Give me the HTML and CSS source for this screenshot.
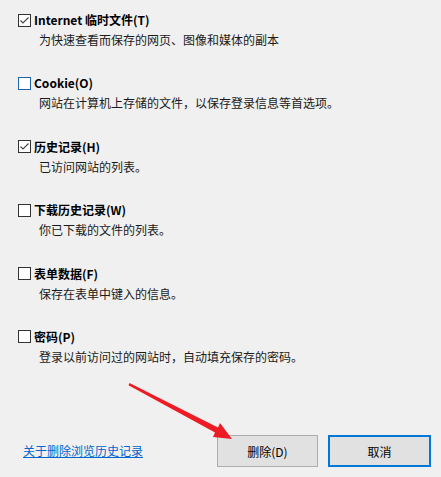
FILE: index.html
```html
<!DOCTYPE html>
<html lang="zh-CN">
<head>
    <meta charset="UTF-8">
    <title>删除浏览历史记录</title>
    <link rel="stylesheet" href="styles.css">
</head>
<body>
    <div class="dialog">
        <ul class="options">
            <li class="option">
                <div class="option-head">
                    <span class="check checked">
                        <svg width="11" height="11" viewBox="0 0 11 11"><polyline points="1.5,5.5 4,8 9.5,2.5" fill="none" stroke="#444" stroke-width="1.1"/></svg>
                    </span>
                    <span class="option-title">Internet 临时文件(T)</span>
                </div>
                <p class="option-desc">为快速查看而保存的网页、图像和媒体的副本</p>
            </li>
            <li class="option">
                <div class="option-head">
                    <span class="check focused"></span>
                    <span class="option-title">Cookie(O)</span>
                </div>
                <p class="option-desc">网站在计算机上存储的文件，以保存登录信息等首选项。</p>
            </li>
            <li class="option">
                <div class="option-head">
                    <span class="check checked">
                        <svg width="11" height="11" viewBox="0 0 11 11"><polyline points="1.5,5.5 4,8 9.5,2.5" fill="none" stroke="#444" stroke-width="1.1"/></svg>
                    </span>
                    <span class="option-title">历史记录(H)</span>
                </div>
                <p class="option-desc">已访问网站的列表。</p>
            </li>
            <li class="option">
                <div class="option-head">
                    <span class="check"></span>
                    <span class="option-title">下载历史记录(W)</span>
                </div>
                <p class="option-desc">你已下载的文件的列表。</p>
            </li>
            <li class="option">
                <div class="option-head">
                    <span class="check"></span>
                    <span class="option-title">表单数据(F)</span>
                </div>
                <p class="option-desc">保存在表单中键入的信息。</p>
            </li>
            <li class="option">
                <div class="option-head">
                    <span class="check"></span>
                    <span class="option-title">密码(P)</span>
                </div>
                <p class="option-desc">登录以前访问过的网站时，自动填充保存的密码。</p>
            </li>
        </ul>

        <div class="footer">
            <a class="help-link" href="#">关于删除浏览历史记录</a>
            <button class="btn btn-delete">删除(D)</button>
            <button class="btn btn-cancel">取消</button>
        </div>
    </div>

    <!-- red annotation arrow drawn over the dialog -->
    <svg class="arrow" width="441" height="477" viewBox="0 0 441 477">
        <polygon points="129.5,383 218,427.4 220,423 232,439 213,437 215,432.6 128.5,385.2" fill="#ed1c24"/>
    </svg>
</body>
</html>
```

FILE: styles.css
```css
* {
    box-sizing: border-box;
    margin: 0;
    padding: 0;
}

body {
    background: #f0f0f0;
    color: #000;
    font-family: "Noto Sans CJK SC", "Noto Sans", sans-serif;
    font-size: 12px;
    line-height: 16px;
    height: 100vh;
    overflow: hidden;
}

.dialog {
    height: 100%;
    display: flex;
    flex-direction: column;
}

.options {
    list-style: none;
    padding: 12px 0 0 18px;
}

.option {
    height: 63.4px;
}

.option-head {
    display: flex;
    align-items: center;
    gap: 3px;
}

.check {
    width: 13px;
    height: 13px;
    border: 1px solid #333;
    background: #fff;
    display: flex;
    align-items: center;
    justify-content: center;
}

.check.focused {
    border-color: #1b64b0;
}

.option-title {
    font-weight: bold;
}

.option-desc {
    margin-top: 4px;
    padding-left: 21px;
    color: #1a1a1a;
}

.footer {
    margin-top: auto;
    padding: 0 10px 10px 23px;
    display: flex;
    align-items: center;
    gap: 10px;
}

.help-link {
    color: #0066cc;
    text-decoration: underline;
    margin-right: auto;
}

.btn {
    height: 32px;
    background: #e1e1e1;
    border: 1px solid #adadad;
    font-family: inherit;
    font-size: 12px;
    color: #000;
}

.btn-delete {
    width: 101px;
}

.btn-cancel {
    width: 103px;
    border: 2px solid #0078d7;
}

.arrow {
    position: absolute;
    top: 0;
    left: 0;
    pointer-events: none;
}
```
